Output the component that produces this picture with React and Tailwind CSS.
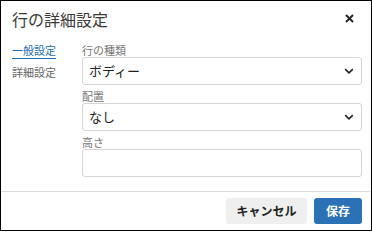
export default function App() {
  const font = { fontFamily: '"Noto Sans CJK JP", "Noto Sans", sans-serif' };
  const Chevron = () => (
    <svg width="10" height="6" viewBox="0 0 10 6" className="shrink-0">
      <path d="M1.2 1.2 L5 4.8 L8.8 1.2" fill="none" stroke="#222" strokeWidth="1.6" />
    </svg>
  );
  return (
    <div className="w-[372px] h-[231px] box-border border border-black bg-white flex flex-col text-[#333]" style={font}>
      <div className="flex items-center justify-between h-[34px] pl-[11px] pr-[17px] pt-[1px]">
        <div className="text-[16px] leading-[20px] text-[#3a3a3a]">行の詳細設定</div>
        <svg width="9" height="9" viewBox="0 0 9 9">
          <path d="M1 1 L8 8 M8 1 L1 8" stroke="#222" strokeWidth="1.9" />
        </svg>
      </div>
      <div className="flex flex-1 pl-[11px] pr-[9px] pt-[8px]">
        <div className="w-[70px] flex flex-col text-[11px]">
          <div className="leading-[14px] text-[#1f6db3] w-fit border-b-[1.5px] border-[#1f6db3] pb-[1px]">一般設定</div>
          <div className="leading-[14px] text-[#666] mt-[6px]">詳細設定</div>
        </div>
        <div className="flex-1 flex flex-col gap-[4px]">
          <div className="flex flex-col">
            <div className="text-[11px] leading-[14px] text-[#777]">行の種類</div>
            <div className="h-[28px] border border-[#d6d6d6] rounded-[3px] flex items-center justify-between pl-[6px] pr-[7px]">
              <span className="text-[13px] text-[#222]">ボディー</span>
              <Chevron />
            </div>
          </div>
          <div className="flex flex-col">
            <div className="text-[11px] leading-[14px] text-[#777]">配置</div>
            <div className="h-[28px] border border-[#d6d6d6] rounded-[3px] flex items-center justify-between pl-[6px] pr-[7px]">
              <span className="text-[13px] text-[#222]">なし</span>
              <Chevron />
            </div>
          </div>
          <div className="flex flex-col">
            <div className="text-[11px] leading-[14px] text-[#777]">高さ</div>
            <div className="h-[28px] border border-[#d6d6d6] rounded-[3px]"></div>
          </div>
        </div>
      </div>
      <div className="border-t border-[#dcdcdc] h-[39px] flex items-center justify-end gap-[7px] pr-[9px]">
        <button className="h-[26px] w-[81px] bg-[#efefef] rounded-[3px] text-[12px] font-bold text-[#222]">キャンセル</button>
        <button className="h-[26px] w-[48px] bg-[#2a72b5] rounded-[3px] text-[12px] font-bold text-white">保存</button>
      </div>
    </div>
  );
}
